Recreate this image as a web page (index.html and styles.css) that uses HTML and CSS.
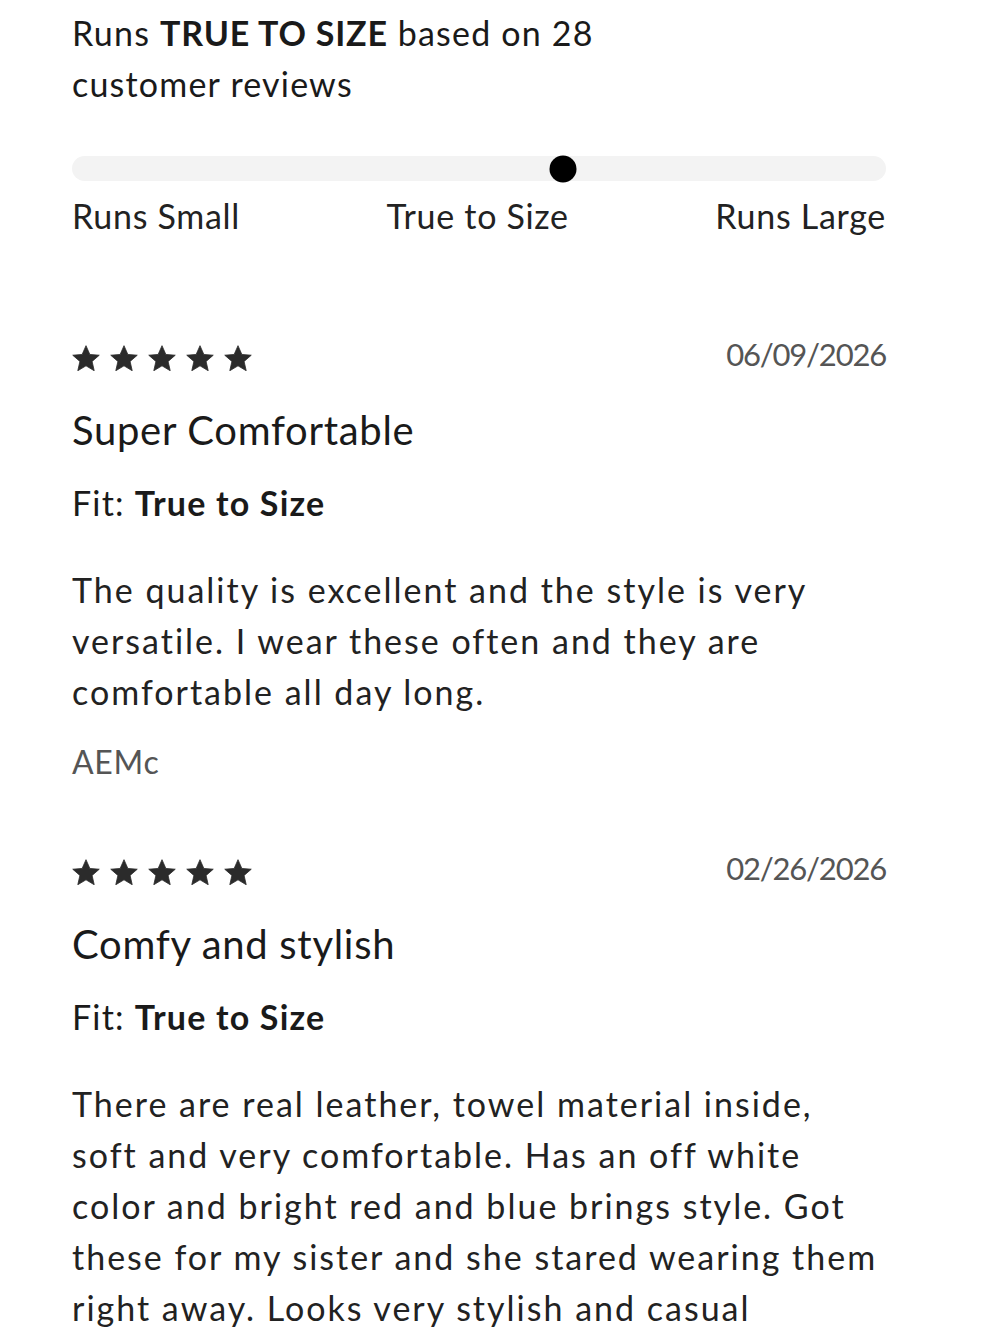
FILE: index.html
```html
<!DOCTYPE html>
<html lang="en">
<head>
  <meta charset="UTF-8" />
  <meta name="viewport" content="width=device-width, initial-scale=1.0"/>
  <title>Customer Reviews</title>
  <link rel="stylesheet" href="styles.css">
</head>
<body>
  <div class="reviews">
    <p class="fit-summary">Runs <strong>TRUE TO SIZE</strong> based on 28 customer reviews</p>

    <div class="fit-scale">
      <div class="fit-track">
        <span class="fit-marker" style="left: 60.3%"></span>
      </div>
      <div class="fit-labels">
        <span>Runs Small</span>
        <span>True to Size</span>
        <span>Runs Large</span>
      </div>
    </div>

    <div class="review">
      <div class="review-head">
        <div class="stars">
          <svg viewBox="1.5 2 21 19.6"><path d="M12 2.5l2.9 6.6 7.1.6-5.4 4.7 1.6 7-6.2-3.7-6.2 3.7 1.6-7L2 9.7l7.1-.6z"/></svg>
          <svg viewBox="1.5 2 21 19.6"><path d="M12 2.5l2.9 6.6 7.1.6-5.4 4.7 1.6 7-6.2-3.7-6.2 3.7 1.6-7L2 9.7l7.1-.6z"/></svg>
          <svg viewBox="1.5 2 21 19.6"><path d="M12 2.5l2.9 6.6 7.1.6-5.4 4.7 1.6 7-6.2-3.7-6.2 3.7 1.6-7L2 9.7l7.1-.6z"/></svg>
          <svg viewBox="1.5 2 21 19.6"><path d="M12 2.5l2.9 6.6 7.1.6-5.4 4.7 1.6 7-6.2-3.7-6.2 3.7 1.6-7L2 9.7l7.1-.6z"/></svg>
          <svg viewBox="1.5 2 21 19.6"><path d="M12 2.5l2.9 6.6 7.1.6-5.4 4.7 1.6 7-6.2-3.7-6.2 3.7 1.6-7L2 9.7l7.1-.6z"/></svg>
        </div>
        <span class="review-date">06/09/2026</span>
      </div>
      <h3 class="review-title">Super Comfortable</h3>
      <p class="review-fit">Fit: <strong>True to Size</strong></p>
      <p class="review-body">The quality is excellent and the style is very versatile. I wear these often and they are comfortable all day long.</p>
      <p class="review-author">AEMc</p>
    </div>

    <div class="review">
      <div class="review-head">
        <div class="stars">
          <svg viewBox="1.5 2 21 19.6"><path d="M12 2.5l2.9 6.6 7.1.6-5.4 4.7 1.6 7-6.2-3.7-6.2 3.7 1.6-7L2 9.7l7.1-.6z"/></svg>
          <svg viewBox="1.5 2 21 19.6"><path d="M12 2.5l2.9 6.6 7.1.6-5.4 4.7 1.6 7-6.2-3.7-6.2 3.7 1.6-7L2 9.7l7.1-.6z"/></svg>
          <svg viewBox="1.5 2 21 19.6"><path d="M12 2.5l2.9 6.6 7.1.6-5.4 4.7 1.6 7-6.2-3.7-6.2 3.7 1.6-7L2 9.7l7.1-.6z"/></svg>
          <svg viewBox="1.5 2 21 19.6"><path d="M12 2.5l2.9 6.6 7.1.6-5.4 4.7 1.6 7-6.2-3.7-6.2 3.7 1.6-7L2 9.7l7.1-.6z"/></svg>
          <svg viewBox="1.5 2 21 19.6"><path d="M12 2.5l2.9 6.6 7.1.6-5.4 4.7 1.6 7-6.2-3.7-6.2 3.7 1.6-7L2 9.7l7.1-.6z"/></svg>
        </div>
        <span class="review-date">02/26/2026</span>
      </div>
      <h3 class="review-title">Comfy and stylish</h3>
      <p class="review-fit">Fit: <strong>True to Size</strong></p>
      <p class="review-body">There are real leather, towel material inside, soft and very comfortable. Has an off white color and bright red and blue brings style. Got these for my sister and she stared wearing them right away. Looks very stylish and casual</p>
    </div>
  </div>
</body>
</html>
```

FILE: styles.css
```css
body {
  margin: 0;
  font-family: Lato, "Open Sans", sans-serif;
  letter-spacing: 0.7px;
  color: #1a1a1a;
  background: #fff;
}

.reviews {
  padding: 7px 114px 0 72px;
}

.fit-summary {
  max-width: 560px;
  margin: 0;
  font-size: 34px;
  line-height: 51px;
  letter-spacing: 1.2px;
}

.fit-summary strong {
  font-weight: 700;
  letter-spacing: 0.8px;
}

.fit-scale {
  margin-top: 47px;
}

.fit-track {
  position: relative;
  height: 25px;
  border-radius: 13px;
  background: #f3f3f3;
}

.fit-marker {
  position: absolute;
  top: 50%;
  width: 27px;
  height: 27px;
  border-radius: 50%;
  background: #000;
  transform: translate(-50%, -50%);
}

.fit-labels {
  display: flex;
  justify-content: space-between;
  margin-top: 17px;
  font-size: 34px;
  line-height: 36px;
  color: #222;
}

.review {
  margin-top: 109px;
}

.review + .review {
  margin-top: 75px;
}

.review-head {
  display: flex;
  justify-content: space-between;
  align-items: center;
  height: 30px;
}

.stars {
  display: flex;
  gap: 10px;
}

.stars svg {
  width: 28px;
  height: 26px;
  fill: #2b2b2b;
  stroke: #2b2b2b;
  stroke-width: 0.6;
  stroke-linejoin: round;
}

.review-date {
  margin-bottom: 8px;
  font-size: 31px;
  line-height: 30px;
  letter-spacing: -1.2px;
  color: #555;
}

.review-title {
  margin: 35px 0 0;
  font-size: 40px;
  font-weight: 400;
  line-height: 44px;
}

.review-fit {
  margin: 31px 0 0;
  font-size: 34px;
  line-height: 40px;
  letter-spacing: 1.2px;
}

.review-fit strong {
  font-weight: 700;
}

.review-body {
  max-width: 810px;
  margin: 41px 0 0;
  font-size: 34px;
  line-height: 51px;
  letter-spacing: 2px;
  color: #222;
}

.review-author {
  margin: 25px 0 0;
  font-size: 32px;
  line-height: 40px;
  color: #555;
}
```
